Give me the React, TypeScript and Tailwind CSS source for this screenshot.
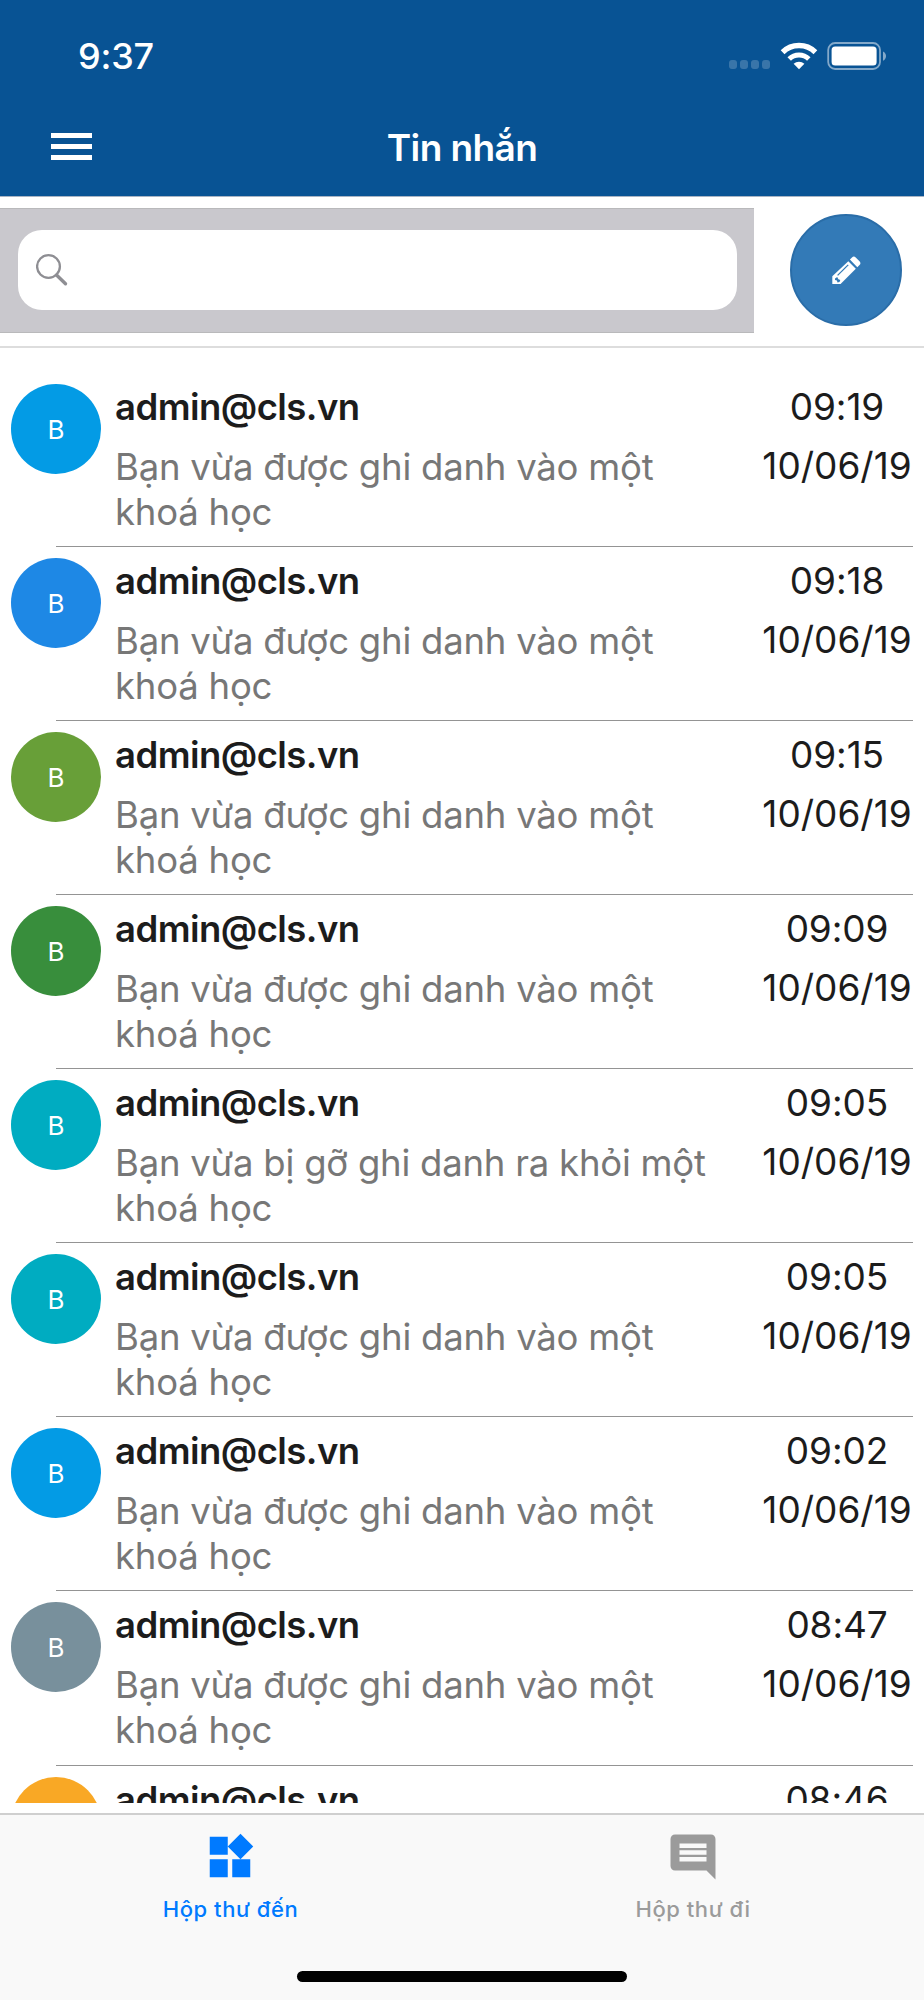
type Message = {
  id: number;
  sender: string;
  text: string;
  time: string;
  date: string;
  color: string;
};

const ENROLLED = "Bạn vừa được ghi danh vào một khoá học";
const REMOVED = "Bạn vừa bị gỡ ghi danh ra khỏi một khoá học";

const messages: Message[] = [
  { id: 1, sender: "admin@cls.vn", text: ENROLLED, time: "09:19", date: "10/06/19", color: "bg-[#039be5]" },
  { id: 2, sender: "admin@cls.vn", text: ENROLLED, time: "09:18", date: "10/06/19", color: "bg-[#1e88e5]" },
  { id: 3, sender: "admin@cls.vn", text: ENROLLED, time: "09:15", date: "10/06/19", color: "bg-[#689f38]" },
  { id: 4, sender: "admin@cls.vn", text: ENROLLED, time: "09:09", date: "10/06/19", color: "bg-[#388e3c]" },
  { id: 5, sender: "admin@cls.vn", text: REMOVED, time: "09:05", date: "10/06/19", color: "bg-[#00acc1]" },
  { id: 6, sender: "admin@cls.vn", text: ENROLLED, time: "09:05", date: "10/06/19", color: "bg-[#00acc1]" },
  { id: 7, sender: "admin@cls.vn", text: ENROLLED, time: "09:02", date: "10/06/19", color: "bg-[#039be5]" },
  { id: 8, sender: "admin@cls.vn", text: ENROLLED, time: "08:47", date: "10/06/19", color: "bg-[#78909c]" },
  { id: 9, sender: "admin@cls.vn", text: ENROLLED, time: "08:46", date: "10/06/19", color: "bg-[#f9a825]" },
];

function StatusBar() {
  return (
    <div className="flex h-[111px] items-center justify-between pl-[78px] pr-[37px]">
      <span className="text-[36px] font-medium leading-none tracking-[-0.2px]">9:37</span>
      <div className="flex items-center">
        <div className="mt-[18px] flex gap-[3px]">
          {[0, 1, 2, 3].map((dot) => (
            <span key={dot} className="h-[9px] w-2 rounded-[3px] bg-white/20" />
          ))}
        </div>
        <svg className="ml-[10px] h-[28px] w-[38px]" viewBox="0 0 38 28" fill="none">
          <path d="M2.6 10.2a23.5 23.5 0 0 1 32.8 0" stroke="#fff" strokeWidth="5.4" />
          <path d="M9.2 17a14 14 0 0 1 19.6 0" stroke="#fff" strokeWidth="5" />
          <path d="M13.6 21.8a8 8 0 0 1 10.8 0L19 27.2z" fill="#fff" />
        </svg>
        <svg className="ml-[9px] h-[28px] w-[60px]" viewBox="0 0 60 28" fill="none">
          <rect x="1.2" y="1" width="51.8" height="26" rx="7" stroke="#fff" strokeOpacity=".5" strokeWidth="1.8" />
          <rect x="4.6" y="4.6" width="45" height="19" rx="3.5" fill="#fff" />
          <path d="M56 9.5c4 1.7 4 7.6 0 9.3z" fill="#fff" fillOpacity=".5" />
        </svg>
      </div>
    </div>
  );
}

function Header() {
  return (
    <header className="h-[197px] shrink-0 border-b border-[#a8b4c4] bg-[#085394] text-white">
      <StatusBar />
      <div className="grid h-[71px] grid-cols-[1fr_auto_1fr] items-center px-[51px]">
        <button type="button" aria-label="Menu" className="flex w-[41px] flex-col gap-[6px]">
          <span className="h-[5px] bg-white" />
          <span className="h-[5px] bg-white" />
          <span className="h-[5px] bg-white" />
        </button>
        <h1 className="pt-[2px] text-[37px] font-semibold leading-none tracking-[-0.6px]">Tin nhắn</h1>
      </div>
    </header>
  );
}

function Toolbar() {
  return (
    <div className="flex h-[151px] shrink-0 items-center border-b-2 border-[#dddddd]">
      <div className="-mt-[2px] flex h-[125px] w-[754px] items-center border-y border-[#b9b9bb] bg-[#c9c8cd] pl-[18px]">
        <label className="-mt-px flex h-[80px] w-[719px] items-center rounded-[24px] bg-white pl-[18px]">
          <svg className="-mt-[1px] h-[34px] w-[34px]" viewBox="0 0 34 34" fill="none" stroke="#8e8e93">
            <circle cx="12.5" cy="13.5" r="11.4" strokeWidth="2.3" />
            <path d="M20.5 22l9 8.8" strokeWidth="3.4" strokeLinecap="round" />
          </svg>
          <input type="text" aria-label="Search" className="flex-1 bg-transparent outline-none" />
        </label>
      </div>
      <button
        type="button"
        aria-label="Compose"
        className="-mt-[3px] ml-[36px] flex h-[112px] w-[112px] items-center justify-center rounded-full border-2 border-[#2a6da8] bg-[#337ab7]"
      >
        <svg className="mr-px mt-px h-[30px] w-[30px]" viewBox="0 0 30 30">
          <path d="M18.9 3.4 21 1.5a2.6 2.6 0 0 1 3.7 0l3.8 3.8a2.6 2.6 0 0 1 0 3.7l-2.2 2.3z" fill="#fff" />
          <path d="M17.3 5.2 24.8 12.7 9.6 28.1H1.3v-7.9z" fill="#fff" />
          <path d="M17.2 8.9 6.6 19.4" stroke="#337ab7" strokeWidth="1.3" />
          <path d="M4 22.6 6.2 21l1.2 2.2 1.9.7-.8 2.2-2 .5-.6-2.2-1.9-.4z" fill="#337ab7" />
        </svg>
      </button>
    </div>
  );
}

function MessageRow({ message }: { message: Message }) {
  return (
    <li className="flex h-[174.07px] shrink-0 flex-col px-[11px]">
      <div className="flex flex-1 items-start">
        <div
          className={`mt-[11px] flex h-[90px] w-[90px] shrink-0 items-center justify-center rounded-full text-[26px] text-white ${message.color}`}
        >
          B
        </div>
        <div className="ml-[14px] w-[610px] pt-[12px]">
          <p className="text-[36.5px] font-semibold leading-[44px] tracking-[-0.55px] text-[#1c1c1c]">{message.sender}</p>
          <p className="mt-[16px] text-[36.5px] leading-[44.7px] tracking-[-0.22px] text-[#777777]">{message.text}</p>
        </div>
        <div className="ml-auto mr-px w-[150px] pt-[12px] text-center text-[37px] leading-[44px] text-[#1c1c1c]">
          <p className="-mx-2 whitespace-nowrap tracking-[-0.1px]">{message.time}</p>
          <p className="-mx-2 mt-[15px] whitespace-nowrap">{message.date}</p>
        </div>
      </div>
      <div className="ml-[45px] h-px bg-[#949494]" />
    </li>
  );
}

function TabBar() {
  return (
    <nav className="mt-[10px] flex flex-1 flex-col items-center border-t-2 border-[#cfcfcf] bg-[#f9f9f9]">
      <div className="grid w-full grid-cols-2 text-[22px] font-medium leading-[28px] tracking-[0.55px]">
        <button type="button" className="flex flex-col items-center pt-[15px] text-[#007aff]">
          <svg className="mr-[2px] h-[54px] w-[54px]" viewBox="0 0 24 24" fill="currentColor">
            <path d="M13 13v8h8v-8h-8zM3 21h8v-8H3v8zM3 3v8h8V3H3zm13.66-1.31L11 7.34 16.66 13l5.66-5.66-5.66-5.65z" />
          </svg>
          <span className="mr-px mt-[11px]">Hộp thư đến</span>
        </button>
        <button type="button" className="flex flex-col items-center pt-[15px] text-[#9b9b9b]">
          <svg className="h-[54px] w-[54px]" viewBox="0 0 24 24" fill="currentColor">
            <path d="M21.99 4c0-1.1-.89-2-1.99-2H4c-1.1 0-2 .9-2 2v12c0 1.1.9 2 2 2h14l4 4-.01-18zM18 14H6v-2h12v2zm0-3H6V9h12v2zm0-3H6V6h12v2z" />
          </svg>
          <span className="mt-[11px]">Hộp thư đi</span>
        </button>
      </div>
      <div className="mb-[18px] mt-auto h-[11px] w-[330px] rounded-full bg-black" />
    </nav>
  );
}

export default function App() {
  return (
    <div className="flex h-[2000px] w-[924px] flex-col overflow-hidden bg-white font-['Inter','Liberation_Sans',sans-serif]">
      <Header />
      <Toolbar />
      <ul className="flex h-[1455px] shrink-0 flex-col overflow-hidden pt-[25px]">
        {messages.map((message) => (
          <MessageRow key={message.id} message={message} />
        ))}
      </ul>
      <TabBar />
    </div>
  );
}
